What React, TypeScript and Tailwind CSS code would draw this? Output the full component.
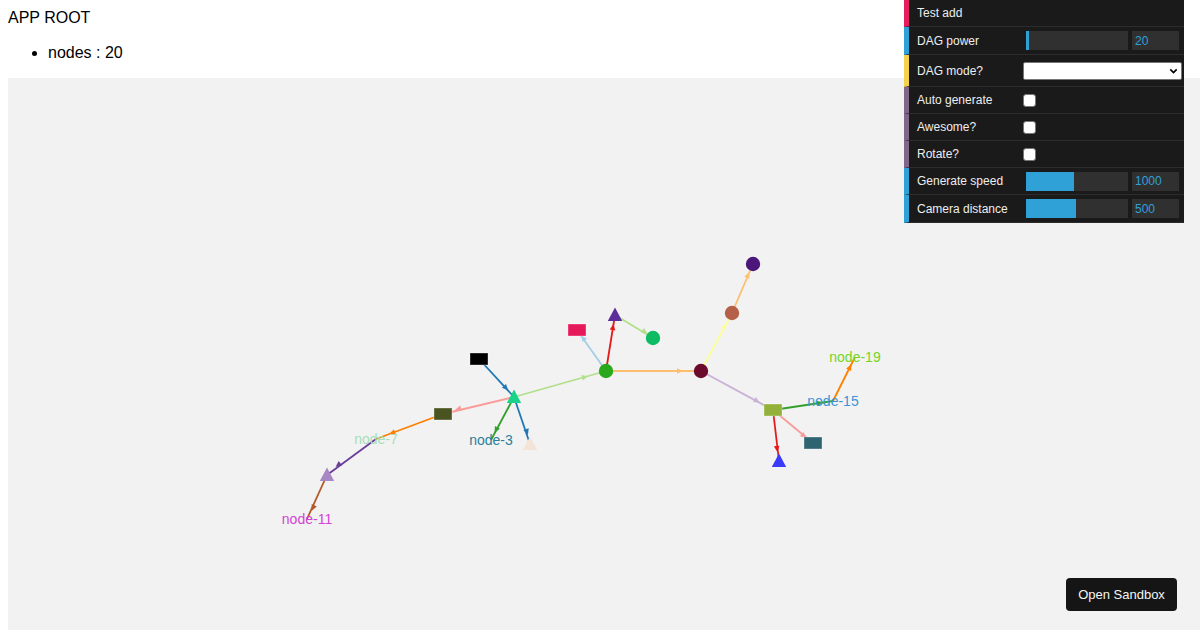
import React from "react";

type Shape = "rect" | "circle" | "tri" | "label";

interface GraphNode {
  id: string;
  x: number;
  y: number;
  shape: Shape;
  color: string;
  text?: string;
}

const nodes: GraphNode[] = [
  { id: "black", x: 479, y: 359, shape: "rect", color: "#000000" },
  { id: "gtri", x: 514, y: 397, shape: "tri", color: "#19d389" },
  { id: "beige", x: 530, y: 444, shape: "tri", color: "#f4e4d8" },
  { id: "n3", x: 491, y: 440, shape: "label", color: "#2d7f9a", text: "node-3" },
  { id: "olive", x: 443, y: 414, shape: "rect", color: "#4a5420" },
  { id: "n7", x: 376, y: 439, shape: "label", color: "#a6dfb6", text: "node-7" },
  { id: "lav", x: 327, y: 475, shape: "tri", color: "#a888c2" },
  { id: "n11", x: 307, y: 519, shape: "label", color: "#d244d4", text: "node-11" },
  { id: "gc", x: 606, y: 371, shape: "circle", color: "#2aa81c" },
  { id: "crimson", x: 577, y: 330, shape: "rect", color: "#e6195b" },
  { id: "ptri", x: 615, y: 315, shape: "tri", color: "#5b2e9b" },
  { id: "green", x: 653, y: 338, shape: "circle", color: "#0dbb63" },
  { id: "maroon", x: 701, y: 371, shape: "circle", color: "#6b0a2c" },
  { id: "brown", x: 732, y: 313, shape: "circle", color: "#b5614a" },
  { id: "pcirc", x: 753, y: 264, shape: "circle", color: "#4b177a" },
  { id: "ogr", x: 773, y: 410, shape: "rect", color: "#93b13a" },
  { id: "n15", x: 833, y: 401, shape: "label", color: "#3b95d8", text: "node-15" },
  { id: "n19", x: 855, y: 357, shape: "label", color: "#76d524", text: "node-19" },
  { id: "teal", x: 813, y: 443, shape: "rect", color: "#2d6470" },
  { id: "btri", x: 779, y: 461, shape: "tri", color: "#3a3afa" },
];

// [source, target, colour, arrow x, arrow y]
const links: [string, string, string, number, number][] = [
  ["black", "gtri", "#1f78b4", 506, 388],
  ["gtri", "beige", "#1f78b4", 527, 432],
  ["gtri", "n3", "#33a02c", 496, 430],
  ["gtri", "olive", "#fb9a99", 458, 409],
  ["gtri", "gc", "#b2df8a", 585, 377],
  ["olive", "n7", "#ff7f00", 392, 433],
  ["n7", "lav", "#6a3d9a", 338, 465],
  ["lav", "n11", "#b15928", 313, 508],
  ["gc", "crimson", "#a6cee3", 583, 338],
  ["gc", "ptri", "#e31a1c", 613, 327],
  ["ptri", "green", "#b2df8a", 645, 332],
  ["gc", "maroon", "#fdbf6f", 680, 371],
  ["maroon", "brown", "#ffff99", 725, 326],
  ["brown", "pcirc", "#fdbf6f", 748, 275],
  ["maroon", "ogr", "#cab2d6", 757, 401],
  ["ogr", "n15", "#33a02c", 820, 403],
  ["n15", "n19", "#ff7f00", 850, 367],
  ["ogr", "teal", "#fb9a99", 804, 436],
  ["ogr", "btri", "#e31a1c", 777, 449],
];

const byId = Object.fromEntries(nodes.map((n) => [n.id, n]));

function arrowPoints(sx: number, sy: number, tx: number, ty: number, ax: number, ay: number) {
  const len = Math.hypot(tx - sx, ty - sy) || 1;
  const dx = (tx - sx) / len;
  const dy = (ty - sy) / len;
  const px = -dy;
  const py = dx;
  const tip = [ax + dx * 3, ay + dy * 3];
  const b1 = [ax - dx * 3 + px * 2.8, ay - dy * 3 + py * 2.8];
  const b2 = [ax - dx * 3 - px * 2.8, ay - dy * 3 - py * 2.8];
  return [tip, b1, b2].map((p) => p.join(",")).join(" ");
}

function Graph() {
  return (
    <svg viewBox="8 78 1192 552" preserveAspectRatio="xMinYMin meet" className="block h-full w-full">
      {links.map(([s, t, c, ax, ay]) => {
        const a = byId[s];
        const b = byId[t];
        return (
          <g key={s + t}>
            <line x1={a.x} y1={a.y} x2={b.x} y2={b.y} stroke={c} strokeWidth={1.8} />
            <polygon points={arrowPoints(a.x, a.y, b.x, b.y, ax, ay)} fill={c} />
          </g>
        );
      })}
      {nodes.map((n) => {
        if (n.shape === "rect")
          return (
            <rect
              key={n.id}
              x={n.x - 9}
              y={n.y - 6}
              width={18}
              height={12}
              fill={n.color}
              stroke="rgba(255,255,255,0.35)"
              strokeWidth={1}
            />
          );
        if (n.shape === "circle") return <circle key={n.id} cx={n.x} cy={n.y} r={7.2} fill={n.color} />;
        if (n.shape === "tri")
          return (
            <polygon
              key={n.id}
              points={`${n.x},${n.y - 7.5} ${n.x - 7.2},${n.y + 6} ${n.x + 7.2},${n.y + 6}`}
              fill={n.color}
            />
          );
        return (
          <text
            key={n.id}
            x={n.x}
            y={n.y}
            fill={n.color}
            fontSize={14}
            textAnchor="middle"
            dominantBaseline="central"
            fontFamily="'Liberation Sans', Arial, sans-serif"
          >
            {n.text}
          </text>
        );
      })}
    </svg>
  );
}

function Row({ color, label, h, children }: { color: string; label: string; h: string; children?: React.ReactNode }) {
  return (
    <div className={`flex items-center border-b border-l-[5px] border-[#2c2c2c] ${h}`} style={{ borderLeftColor: color }}>
      <div className="w-[114px] shrink-0 pl-[8px] text-[12px] text-[#eeeeee]">{label}</div>
      <div className="flex flex-1 items-center">{children}</div>
    </div>
  );
}

function NumberCtl({ fill, value }: { fill: number; value: string }) {
  return (
    <div className="flex items-center">
      <div className="ml-[3px] h-[19px] w-[102px] bg-[#303030]">
        <div className="h-full bg-[#2fa1d6]" style={{ width: fill }} />
      </div>
      <div className="ml-[4px] flex h-[19px] w-[47px] items-center bg-[#303030] pl-[3px] text-[12px] text-[#2fa1d6]">
        {value}
      </div>
    </div>
  );
}

function Check() {
  return <div className="h-[13px] w-[13px] rounded-[3px] border border-[#767676] bg-white" />;
}

export default function App() {
  return (
    <div className="relative h-screen w-full overflow-hidden bg-white font-['Liberation_Sans',Arial,sans-serif] text-black">
      <div className="flex h-full flex-col pl-2 pt-[9px]">
        <div className="text-[16px] leading-[18.4px]">APP ROOT</div>
        <ul className="mb-[15px] mt-[17px] list-disc pl-10 text-[16px] leading-[18.4px]">
          <li>nodes : 20</li>
        </ul>
        <div className="min-h-0 flex-1 bg-[#f2f2f2]">
          <Graph />
        </div>
      </div>

      <div className="absolute right-4 top-0 w-[280px] bg-[#1a1a1a]">
        <Row color="#e61d5f" label="Test add" h="h-[27px]" />
        <Row color="#2fa1d6" label="DAG power" h="h-[28px]">
          <NumberCtl fill={3} value="20" />
        </Row>
        <Row color="#f4d14e" label="DAG mode?" h="h-[32px]">
          <div className="relative">
            <div className="h-[18px] w-[159px] rounded-[2px] border border-[#767676] bg-white" />
            <svg viewBox="0 0 10 10" className="absolute right-[4px] top-[5px] h-[8px] w-[9px]">
              <path d="M1 3 L5 7 L9 3" stroke="#000" strokeWidth="2" fill="none" />
            </svg>
          </div>
        </Row>
        <Row color="#806787" label="Auto generate" h="h-[27px]">
          <Check />
        </Row>
        <Row color="#806787" label="Awesome?" h="h-[27px]">
          <Check />
        </Row>
        <Row color="#806787" label="Rotate?" h="h-[27px]">
          <Check />
        </Row>
        <Row color="#2fa1d6" label="Generate speed" h="h-[27px]">
          <NumberCtl fill={48} value="1000" />
        </Row>
        <Row color="#2fa1d6" label="Camera distance" h="h-[28px]">
          <NumberCtl fill={50} value="500" />
        </Row>
      </div>

      <button className="absolute bottom-[19px] right-[23px] flex h-[33px] w-[111px] items-center justify-center rounded-[4px] bg-[#151515] text-[13px] text-[#f4f4f4]">
        Open Sandbox
      </button>
    </div>
  );
}
